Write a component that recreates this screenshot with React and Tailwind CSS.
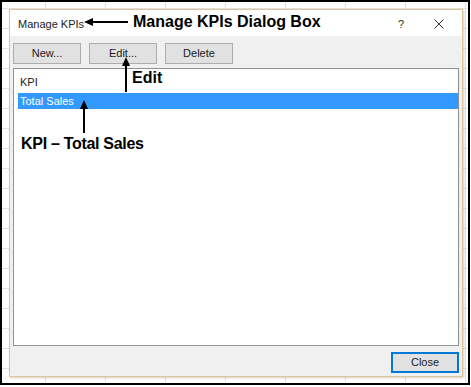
import React from 'react';

const DlgButton = ({ label, focused }) => (
  <button
    className={`w-[68px] h-[21px] flex items-center justify-center text-[11px] leading-[13px] text-[#1a1a1a] bg-[#e1e1e1] border ${
      focused ? 'border-[#0078d7] shadow-[inset_0_0_0_1px_#0078d7]' : 'border-[#adadad]'
    }`}
  >
    {label}
  </button>
);

const App = () => {
  return (
    <div className="w-[471px] h-[387px] bg-white">
      <div className="relative w-[470px] h-[385px] border-2 border-black pt-[7px] pl-[7px] font-['Liberation_Sans',Arial,sans-serif] bg-white bg-[linear-gradient(#e2e2e2_1px,transparent_1px),linear-gradient(90deg,#e2e2e2_1px,transparent_1px)] bg-[size:60px_20px] bg-[position:43px_6px]">
        {/* dialog */}
        <div className="w-[454px] h-[368px] flex flex-col bg-[#f0f0f0] border border-[#dfc39c] shadow-[1px_1px_2px_rgba(150,120,80,0.35)]">
          <div className="h-[26px] bg-white flex items-center pt-[2px] pl-[8px] text-[11px] leading-[13px] text-[#222]">
            <span>Manage KPIs</span>
            <span className="ml-auto w-[10px] text-[#333]">?</span>
            <svg className="ml-[26px] mr-[18px]" width="10" height="10" viewBox="0 0 10 10">
              <path d="M0.5 0.5 L9.5 9.5 M9.5 0.5 L0.5 9.5" stroke="#333" strokeWidth="1" fill="none" />
            </svg>
          </div>

          <div className="flex gap-[8px] pt-[7px] px-[3px]">
            <DlgButton label="New..." />
            <DlgButton label="Edit..." />
            <DlgButton label="Delete" />
          </div>

          <div className="mt-[4px] mx-[3px] h-[278px] border border-[#8e9196] bg-white text-[11px] text-[#222]">
            <div className="h-[24px] flex items-end pb-[4px] pl-[6px] leading-[13px]">KPI</div>
            <div className="ml-[4px] h-[16px] leading-[16px] pl-[2px] bg-[#3399ff] text-white">Total Sales</div>
          </div>

          <div className="flex justify-end pt-[6px] pr-[3px]">
            <DlgButton label="Close" focused />
          </div>
        </div>

        {/* annotations */}
        <svg
          className="absolute top-0 left-0 pointer-events-none"
          width="466"
          height="381"
          viewBox="2 2 466 381"
        >
          <line x1="128" y1="22" x2="90" y2="22" stroke="#000" strokeWidth="2" />
          <polygon points="84,22 93,18 93,26" fill="#000" />
          <line x1="126" y1="92" x2="126" y2="63" stroke="#000" strokeWidth="2" />
          <polygon points="126,57 122,66 130,66" fill="#000" />
          <line x1="84" y1="133" x2="84" y2="106" stroke="#000" strokeWidth="2" />
          <polygon points="84,100 80,109 88,109" fill="#000" />
        </svg>
        <div className="absolute top-[12px] left-[131px] text-[16px] leading-[16px] font-bold text-black whitespace-nowrap">
          Manage KPIs Dialog Box
        </div>
        <div className="absolute top-[68px] left-[130px] text-[16px] leading-[16px] font-bold text-black">
          Edit
        </div>
        <div className="absolute top-[134px] left-[19px] text-[16px] leading-[16px] font-bold text-black whitespace-nowrap tracking-[-0.3px]">
          KPI – Total Sales
        </div>
      </div>
    </div>
  );
};

export default App;
